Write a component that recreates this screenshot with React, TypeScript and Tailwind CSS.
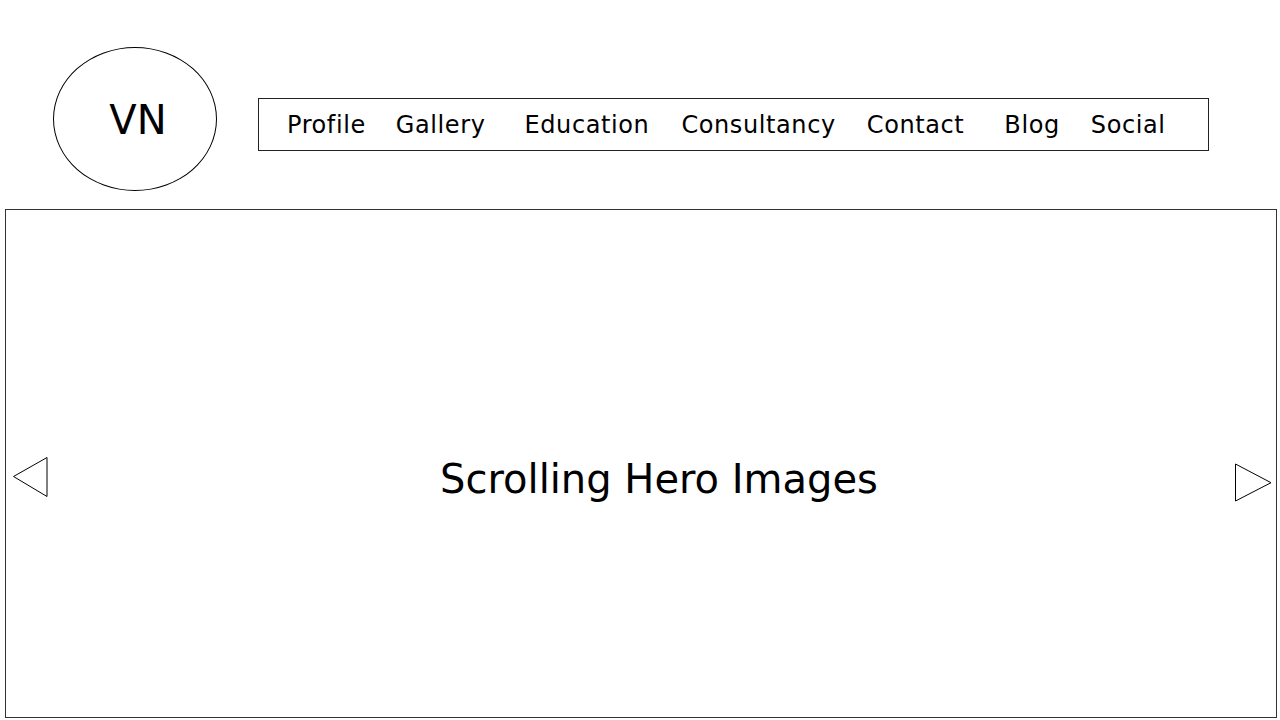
const links = [
  { label: 'Profile', ml: 'ml-[28px]' },
  { label: 'Gallery', ml: 'ml-[30px]' },
  { label: 'Education', ml: 'ml-[39px]' },
  { label: 'Consultancy', ml: 'ml-[32px]' },
  { label: 'Contact', ml: 'ml-[31px]' },
  { label: 'Blog', ml: 'ml-[40px]' },
  { label: 'Social', ml: 'ml-[31px]' },
];

export default function App() {
  return (
    <div className="w-[1280px] h-[720px] bg-white overflow-hidden text-black font-['DejaVu_Sans',sans-serif]">
      <header className="flex items-start pt-[47px] pl-[53px]">
        <div className="w-[164px] h-[144px] rounded-[50%] border border-black flex items-center justify-center pl-[6px] pt-[2px] text-[40px] leading-none">
          VN
        </div>
        <nav className="ml-[41px] mt-[51px] w-[951px] h-[53px] border border-[#222] flex items-center text-[24px] leading-none tracking-[0.6px]">
          {links.map((l) => (
            <a key={l.label} href="#" className={`${l.ml} whitespace-nowrap`}>
              {l.label}
            </a>
          ))}
        </nav>
      </header>

      <section className="relative ml-[5px] mt-[18px] w-[1272px] h-[509px] border border-[#333] flex items-center justify-center pl-[36px] pt-[30px]">
        <h1 className="text-[40px] leading-none">Scrolling Hero Images</h1>

        <svg className="absolute left-[6px] top-[246px]" width="38" height="42" viewBox="0 0 38 42">
          <polygon points="1.5,20.5 35,1.5 35,40.5" fill="none" stroke="#000" strokeWidth="1" />
        </svg>
        <svg className="absolute left-[1228px] top-[253px]" width="40" height="40" viewBox="0 0 40 40">
          <polygon points="1.5,1 1.5,38 37,19.7" fill="none" stroke="#000" strokeWidth="1" />
        </svg>
      </section>
    </div>
  );
}
